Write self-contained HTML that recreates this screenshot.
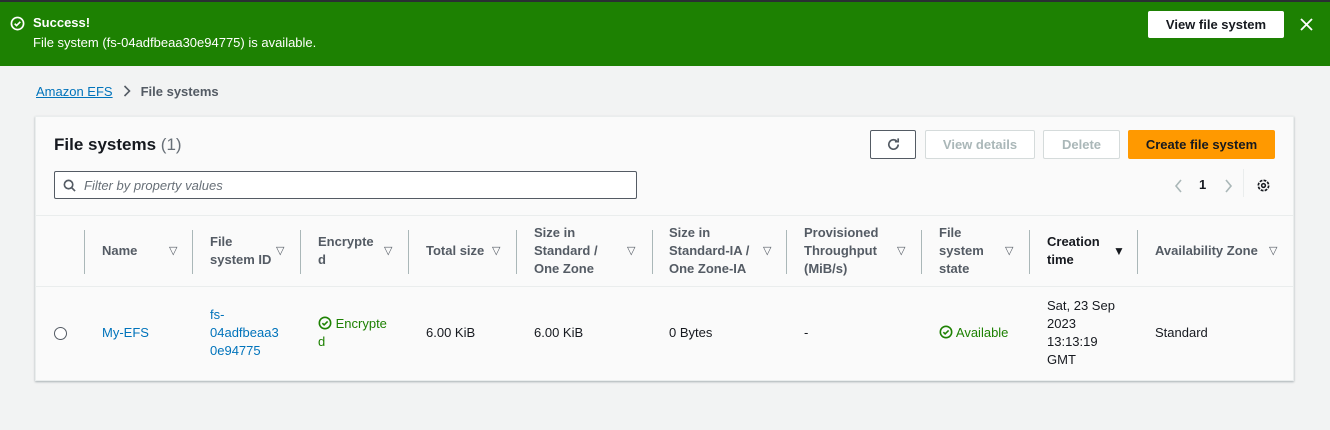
<!DOCTYPE html><html><head><style>
*{box-sizing:border-box;margin:0;padding:0}
body{width:1330px;height:430px;background:#f2f3f3;font-family:"Liberation Sans",sans-serif;font-size:13px;color:#16191f;position:relative;overflow:hidden}
.a{position:absolute}
.flash{left:0;top:0;width:1330px;height:66px;background:#1d8102;border-top:2px solid #2a2e33;color:#fff}
.btn{position:absolute;border:1px solid #d5dbdb;background:#fff;font-weight:bold;text-align:center;font-size:13px;border-radius:2px}
.card{left:35px;top:116px;width:1259px;height:265px;background:#fafafa;border:1px solid #eaeded;box-shadow:0 1px 2px rgba(0,28,36,.3)}
.th{position:absolute;top:99px;height:70px;font-weight:bold;color:#545b64;display:flex;align-items:center;line-height:18px}
.sep{position:absolute;top:113px;width:1px;height:44px;background:#aab7b8}
.tri{position:absolute;top:127px;font-size:11px;color:#545b64}
.td{position:absolute;top:169px;height:94px;display:flex;align-items:center;line-height:18px}
.lnk{color:#0073bb}
</style></head><body>
<div class="a flash">
<svg class="a" style="left:10px;top:14px" width="15" height="15" viewBox="0 0 16 16"><circle cx="8" cy="8" r="6.5" fill="none" stroke="#fff" stroke-width="1.8"/><path d="M5 8.2l2 2 4-4" fill="none" stroke="#fff" stroke-width="1.8"/></svg>
<div class="a" style="left:33px;top:13px;font-weight:bold">Success!</div>
<div class="a" style="left:33px;top:33px">File system (fs-04adfbeaa30e94775) is available.</div>
<div class="btn" style="left:1148px;top:9px;width:136px;height:27px;line-height:25px;color:#16191f;border-color:#fff">View file system</div>
<svg class="a" style="left:1300px;top:16px" width="13" height="13" viewBox="0 0 13 13"><path d="M1 1l11 11M12 1L1 12" stroke="#fff" stroke-width="1.8"/></svg>
</div>
<div class="a" style="left:36px;top:84px"><span class="lnk" style="text-decoration:underline">Amazon EFS</span><svg style="margin:0 10px;vertical-align:-1px" width="8" height="12" viewBox="0 0 8 12"><path d="M1.5 1l5 5-5 5" fill="none" stroke="#545b64" stroke-width="1.6"/></svg><b style="color:#545b64">File systems</b></div>
<div class="a card">
<div class="a" style="left:18px;top:18px;font-size:17px;font-weight:bold">File systems <span style="font-weight:normal;color:#687078">(1)</span></div>
<div class="btn" style="left:834px;top:13px;width:46px;height:29px;border-color:#545b64">
<svg class="a" style="left:15px;top:6px" width="15" height="15" viewBox="0 0 16 16"><path d="M13 8a5 5 0 1 1-1.6-3.7" fill="none" stroke="#545b64" stroke-width="1.8"/><path d="M13 1.5V5H9.5" fill="none" stroke="#545b64" stroke-width="1.8"/></svg></div>
<div class="btn" style="left:889px;top:13px;width:110px;height:29px;line-height:27px;color:#aab7b8">View details</div>
<div class="btn" style="left:1007px;top:13px;width:77px;height:29px;line-height:27px;color:#aab7b8">Delete</div>
<div class="btn" style="left:1092px;top:13px;width:147px;height:29px;line-height:27px;background:#ff9900;border-color:#ff9900">Create file system</div>
<div class="a" style="left:18px;top:54px;width:583px;height:28px;border:1px solid #545b64;background:#fff;border-radius:2px">
<svg class="a" style="left:8px;top:7px" width="13" height="13" viewBox="0 0 14 14"><circle cx="6" cy="6" r="4.5" fill="none" stroke="#545b64" stroke-width="1.8"/><path d="M9.5 9.5l3.5 3.5" stroke="#545b64" stroke-width="1.8"/></svg>
<i class="a" style="left:29px;top:6px;color:#687078">Filter by property values</i></div>
<svg class="a" style="left:1138px;top:62px" width="9" height="14" viewBox="0 0 9 14"><path d="M7 1L2 7l5 6" fill="none" stroke="#aab7b8" stroke-width="1.6"/></svg>
<div class="a" style="left:1163px;top:60px;font-weight:bold">1</div>
<svg class="a" style="left:1188px;top:62px" width="9" height="14" viewBox="0 0 9 14"><path d="M2 1l5 6-5 6" fill="none" stroke="#aab7b8" stroke-width="1.6"/></svg>
<div class="a" style="left:1207px;top:52px;width:1px;height:28px;background:#eaeded"></div>
<svg class="a" style="left:1220px;top:61px" width="15" height="15" viewBox="0 0 16 16"><circle cx="8" cy="8" r="5.5" fill="none" stroke="#16191f" stroke-width="1.8" stroke-dasharray="3 1.3"/><circle cx="8" cy="8" r="2" fill="none" stroke="#16191f" stroke-width="1.6"/></svg>
<div class="a" style="left:0;top:98px;width:1257px;height:1px;background:#eaeded"></div>
<div class="a" style="left:0;top:169px;width:1257px;height:1px;background:#eaeded"></div>
<div class="sep" style="left:48px"></div><div class="sep" style="left:156px"></div><div class="sep" style="left:264px"></div><div class="sep" style="left:372px"></div><div class="sep" style="left:480px"></div><div class="sep" style="left:616px"></div><div class="sep" style="left:750px"></div><div class="sep" style="left:885px"></div><div class="sep" style="left:993px"></div><div class="sep" style="left:1101px"></div>
<div class="th" style="left:66px">Name</div><div class="tri" style="left:133px">▽</div>
<div class="th" style="left:174px">File<br>system ID</div><div class="tri" style="left:240px">▽</div>
<div class="th" style="left:282px">Encrypte<br>d</div><div class="tri" style="left:348px">▽</div>
<div class="th" style="left:390px">Total size</div><div class="tri" style="left:456px">▽</div>
<div class="th" style="left:498px">Size in<br>Standard /<br>One Zone</div><div class="tri" style="left:591px">▽</div>
<div class="th" style="left:633px">Size in<br>Standard-IA /<br>One Zone-IA</div><div class="tri" style="left:727px">▽</div>
<div class="th" style="left:768px">Provisioned<br>Throughput<br>(MiB/s)</div><div class="tri" style="left:861px">▽</div>
<div class="th" style="left:903px">File<br>system<br>state</div><div class="tri" style="left:969px">▽</div>
<div class="th" style="left:1011px;color:#16191f">Creation<br>time</div><div class="tri" style="left:1077px;color:#16191f;font-size:12px">▼</div>
<div class="th" style="left:1119px">Availability Zone</div><div class="tri" style="left:1233px">▽</div>
<div class="a" style="left:18px;top:210px;width:13px;height:13px;border:1px solid #545b64;border-radius:50%;background:#fff"></div>
<div class="td lnk" style="left:66px">My-EFS</div>
<div class="td lnk" style="left:174px">fs-<br>04adfbeaa3<br>0e94775</div>
<div class="td" style="left:282px;color:#1d8102"><div><svg width="14" height="14" viewBox="0 0 16 16" style="vertical-align:-2px"><circle cx="8" cy="8" r="6.5" fill="none" stroke="#1d8102" stroke-width="1.8"/><path d="M5 8.2l2 2 4-4" fill="none" stroke="#1d8102" stroke-width="1.8"/></svg> Encrypte<br>d</div></div>
<div class="td" style="left:390px">6.00 KiB</div>
<div class="td" style="left:498px">6.00 KiB</div>
<div class="td" style="left:633px">0 Bytes</div>
<div class="td" style="left:768px">-</div>
<div class="td" style="left:903px;color:#1d8102"><div><svg width="14" height="14" viewBox="0 0 16 16" style="vertical-align:-2px"><circle cx="8" cy="8" r="6.5" fill="none" stroke="#1d8102" stroke-width="1.8"/><path d="M5 8.2l2 2 4-4" fill="none" stroke="#1d8102" stroke-width="1.8"/></svg> Available</div></div>
<div class="td" style="left:1011px">Sat, 23 Sep<br>2023<br>13:13:19<br>GMT</div>
<div class="td" style="left:1119px">Standard</div>
</div>
</body></html>
